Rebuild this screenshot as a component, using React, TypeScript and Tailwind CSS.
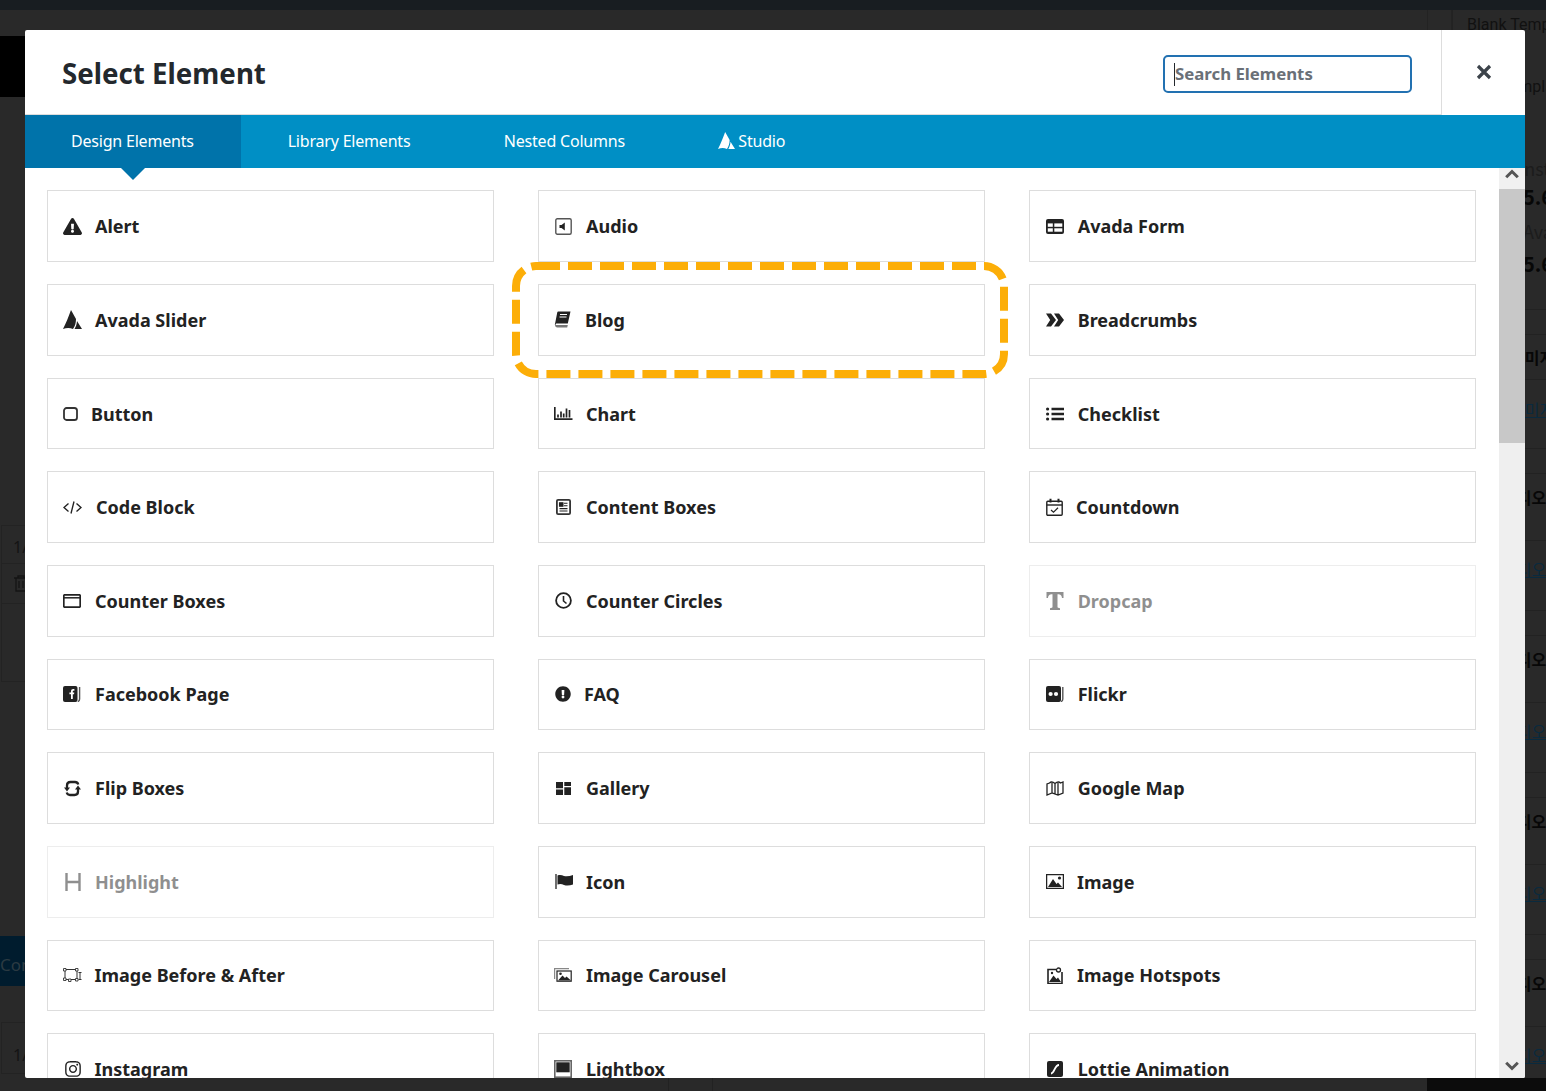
import React from "react";
import { FaExclamationTriangle, FaExclamationCircle, FaInstagram } from "react-icons/fa";

const sv = (w: number, h: number, children: React.ReactNode) => (
  <svg width={w} height={h} viewBox={`0 0 ${w} ${h}`} fill="none" className="block shrink-0">{children}</svg>
);
const C = "#222222";

function AvadaLogo({ color, w, h }: { color: string; w: number; h: number }) {
  return (
    <svg width={w} height={h} viewBox="0 0 19 19" className="block shrink-0">
      <path d="M0 19C3 13 5.5 7 8 0L13 9C13 13 12 16 10 19C7 17.5 3.5 17.5 0 19Z" fill={color} />
      <path d="M14 11L19 19H11.5C12.8 17 13.8 14 14 11Z" fill={color} />
    </svg>
  );
}

const icons: Record<string, React.ReactNode> = {
  alert: <FaExclamationTriangle size={19} color={C} />,
  audio: sv(17, 17, <><rect x="0.8" y="0.8" width="15.4" height="15.4" rx="1.5" stroke="#555" strokeWidth="1.4" /><path d="M4.5 7H6.5L9.8 4.5V12.5L6.5 10H4.5Z" fill={C} /></>),
  form: sv(18, 15, <><rect width="18" height="15" rx="2" fill={C} /><rect x="1.8" y="4.4" width="5" height="3.4" fill="#fff" /><rect x="8.3" y="4.4" width="8" height="3.4" fill="#fff" /><rect x="1.8" y="9.3" width="5" height="3.4" fill="#fff" /><rect x="8.3" y="9.3" width="8" height="3.4" fill="#fff" /></>),
  avada: <AvadaLogo color={C} w={19} h={19} />,
  blog: sv(17, 17, <><path d="M4.2 0.5H16.5L13.8 12.5H3C1.8 12.5 1.4 13.2 1.5 14H0.8L3.3 1.3C3.4 0.8 3.7 0.5 4.2 0.5Z" fill={C} /><path d="M1 14C1 15.6 2 16.5 3.2 16.5H13.2L13.8 14Z" fill="#777" /><path d="M6 3.5H13M5.5 6H12.5" stroke="#fff" strokeWidth="1" /></>),
  crumbs: sv(18, 14, <path d="M0 0.5H5L10 7L5 13.5H0L4.2 7ZM8 0.5H13L18 7L13 13.5H8L12.2 7Z" fill={C} />),
  button: sv(15, 14, <rect x="1" y="1" width="13" height="12" rx="2.6" stroke="#333" strokeWidth="1.8" />),
  chart: sv(19, 13, <path d="M0.8 0V12.1H18.5M4 7.5V10.5M7 4.5V10.5M9.7 6.5V10.5M12.5 1.5V10.5M15.5 3V10.5" stroke="#222" strokeWidth="1.7" />),
  checklist: sv(18, 14, <><circle cx="1.6" cy="2" r="1.6" fill={C} /><circle cx="1.6" cy="7" r="1.6" fill={C} /><circle cx="1.6" cy="12" r="1.6" fill={C} /><path d="M5.5 2H18M5.5 7H18M5.5 12H18" stroke={C} strokeWidth="2.3" /></>),
  code: sv(19, 13, <path d="M5.5 2.5L1 6.5L5.5 10.5M13.5 2.5L18 6.5L13.5 10.5M11 0.5L8 12.5" stroke={C} strokeWidth="1.35" />),
  content: sv(15, 16, <><rect x="0.9" y="0.9" width="13.2" height="14.2" rx="1.2" stroke="#333" strokeWidth="1.8" /><path d="M3.5 3.8H7V7.3H3.5ZM8 4.2H11.5M8 6.8H11.5M3.5 9.6H11.5M3.5 12H11.5" fill={C} stroke={C} strokeWidth="1.1" /></>),
  countdown: sv(17, 18, <><rect x="0.8" y="3.2" width="15.4" height="14" rx="1" stroke={C} strokeWidth="1.4" /><path d="M0.8 7H16.2" stroke={C} strokeWidth="1.4" /><path d="M4.5 0.8V4.5M12.5 0.8V4.5" stroke={C} strokeWidth="2" /><path d="M5 12L7.5 14.2L12 9.8" stroke={C} strokeWidth="1.2" /></>),
  boxes: sv(18, 14, <><rect x="0.8" y="0.8" width="16.4" height="12.4" rx="1" stroke="#222" strokeWidth="1.7" /><path d="M1 3.8H17" stroke="#222" strokeWidth="1.5" /></>),
  circles: sv(17, 17, <><circle cx="8.5" cy="8.5" r="7.4" stroke={C} strokeWidth="1.8" /><path d="M8.5 4V9L11.5 11.5" stroke={C} strokeWidth="1.6" /></>),
  dropcap: sv(18, 18, <path d="M0.5 0H17.5V6H16C15.6 3.5 15 2.3 11.5 2.3V15C11.5 15.8 12.5 16 14 16.2V18H4V16.2C5.5 16 6.5 15.8 6.5 15V2.3C3 2.3 2.4 3.5 2 6H0.5Z" fill={C} />),
  fb: sv(18, 16, <><rect width="14.5" height="16" rx="2" fill={C} /><path d="M8 13V8.2H6.4V6.4H8V5.2C8 3.7 9 3 10.1 3H11.4V4.7H10.5C9.9 4.7 9.8 5 9.8 5.5V6.4H11.3L11 8.2H9.8V13Z" fill="#fff" /><path d="M16.6 1V13C16.6 14.5 16 15.3 14.8 15.6" stroke="#555" strokeWidth="1.4" /></>),
  faq: <FaExclamationCircle size={16} color={C} />,
  flickr: sv(18, 16, <><rect width="15" height="16" rx="2" fill={C} /><circle cx="4.6" cy="8" r="2.1" fill="#fff" /><circle cx="10" cy="8" r="2.1" fill="#fff" /><path d="M16.8 1V13C16.8 14.5 16.2 15.3 15 15.6" stroke="#555" strokeWidth="1.4" /></>),
  flip: sv(17, 17, <><path d="M3 8V5.5C3 3.3 4.5 2 6.5 2H11C12.8 2 13.8 3 14.3 4.5" stroke={C} strokeWidth="2.3" /><path d="M14 9V11.5C14 13.7 12.5 15 10.5 15H6C4.2 15 3.2 14 2.7 12.5" stroke={C} strokeWidth="2.3" /><path d="M0 7.5H6L3 11.5ZM11 9.5H17L14 5.5Z" fill={C} /></>),
  gallery: sv(15, 13, <path d="M0 0H7V6.2H0ZM8.3 0H15V4H8.3ZM0 7.5H7V13H0ZM8.3 5.2H15V13H8.3Z" fill={C} />),
  map: sv(18, 15, <path d="M1 3V14L6 12L12 14L17 12V1L14.5 2C13 0.5 11 0.8 9 2.6C7 0.8 5 0.5 3.5 2ZM6 2V12M9 3V13M12 2V14" stroke="#222" strokeWidth="1.3" />),
  highlight: sv(16, 18, <path d="M1.5 0V18M14.5 0V18M1.5 9H14.5" stroke={C} strokeWidth="2.4" />),
  icon: sv(18, 15, <><path d="M1 0V15" stroke={C} strokeWidth="1.3" /><path d="M2.5 1.5C5 0.5 7 1.2 9 2C12 2.7 15 2 18 1V10.5C15 11.5 12 12 9 11C7 10 5 9.5 2.5 10.5Z" fill={C} /></>),
  image: sv(18, 15, <><rect x="0.6" y="0.6" width="16.8" height="13.8" stroke={C} strokeWidth="1.3" /><path d="M2 13L7 5L10.5 10L12 8.5L16 13Z" fill={C} /><circle cx="13.5" cy="4" r="1.6" fill={C} /></>),
  before: sv(19, 14, <><path d="M2 1.5H14V11.5H2ZM15.5 4.5H18.5M17 4.5V11.5M15.5 11.5H18.5" stroke="#333" strokeWidth="1" /><path d="M0.5 0.5H3V3H0.5ZM12.5 0.5H15V3H12.5ZM0.5 10H3V12.5H0.5ZM12.5 10.5H15V13H12.5ZM5.5 11H8V13.5H5.5Z" stroke="#333" strokeWidth="0.9" fill="#fff" /></>),
  carousel: sv(18, 14, <><path d="M0.6 11V0.6H15" stroke="#888" strokeWidth="1.2" /><rect x="2.4" y="2.4" width="15.4" height="11.4" fill={C} /><rect x="3.6" y="3.6" width="13" height="9" fill="#fff" /><path d="M4 12.5L8.5 7.5L11 10L12.5 8.5L17 12.5Z" fill={C} /><circle cx="6.5" cy="5.8" r="1.3" fill={C} /></>),
  hotspots: sv(16, 17, <><path d="M9 2.5H1V16.5H15V5" stroke={C} strokeWidth="1.6" /><path d="M2 15L6.5 8.5L9.5 12L11 10.5L14 15Z" fill={C} /><circle cx="11.5" cy="3" r="2" stroke={C} strokeWidth="1.3" /><circle cx="5" cy="6" r="1.2" fill={C} /></>),
  instagram: <FaInstagram size={18} color={C} />,
  lightbox: sv(18, 18, <><rect x="0.8" y="0.8" width="16.4" height="16.4" stroke="#666" strokeWidth="1.6" /><rect x="2.3" y="2.3" width="13.4" height="10" fill={C} /></>),
  lottie: sv(16, 16, <><rect width="16" height="16" rx="2" fill={C} /><path d="M4 12.5C7.5 12.5 7.5 4 12 4" stroke="#fff" strokeWidth="1.8" /></>),
};

type Item = { label: string; icon: string; w: string; off?: boolean };
const items: Item[] = [
  { label: "Alert", icon: "alert", w: "w-[32px]" },
  { label: "Audio", icon: "audio", w: "w-[32px] pl-px" },
  { label: "Avada Form", icon: "form", w: "w-[32.7px] pl-px" },
  { label: "Avada Slider", icon: "avada", w: "w-[32px]" },
  { label: "Blog", icon: "blog", w: "w-[31px]" },
  { label: "Breadcrumbs", icon: "crumbs", w: "w-[32.7px] pl-px" },
  { label: "Button", icon: "button", w: "w-[28px]" },
  { label: "Chart", icon: "chart", w: "w-[32px]" },
  { label: "Checklist", icon: "checklist", w: "w-[32.7px] pl-px" },
  { label: "Code Block", icon: "code", w: "w-[33px]" },
  { label: "Content Boxes", icon: "content", w: "w-[32px] pl-[2px]" },
  { label: "Countdown", icon: "countdown", w: "w-[31px] pl-px" },
  { label: "Counter Boxes", icon: "boxes", w: "w-[32px]" },
  { label: "Counter Circles", icon: "circles", w: "w-[32px] pl-px" },
  { label: "Dropcap", icon: "dropcap", w: "w-[32.7px] pl-px", off: true },
  { label: "Facebook Page", icon: "fb", w: "w-[32px]" },
  { label: "FAQ", icon: "faq", w: "w-[30px] pl-px" },
  { label: "Flickr", icon: "flickr", w: "w-[32.7px] pl-px" },
  { label: "Flip Boxes", icon: "flip", w: "w-[32px] pl-px" },
  { label: "Gallery", icon: "gallery", w: "w-[32px] pl-[2px]" },
  { label: "Google Map", icon: "map", w: "w-[32.7px] pl-px" },
  { label: "Highlight", icon: "highlight", w: "w-[32px] pl-[2px]", off: true },
  { label: "Icon", icon: "icon", w: "w-[32px] pl-px" },
  { label: "Image", icon: "image", w: "w-[32px] pl-px" },
  { label: "Image Before & After", icon: "before", w: "w-[31.5px]" },
  { label: "Image Carousel", icon: "carousel", w: "w-[32px]" },
  { label: "Image Hotspots", icon: "hotspots", w: "w-[32px] pl-[2px]" },
  { label: "Instagram", icon: "instagram", w: "w-[31.5px] pl-px" },
  { label: "Lightbox", icon: "lightbox", w: "w-[32px]" },
  { label: "Lottie Animation", icon: "lottie", w: "w-[32.7px] pl-[2px]" },
];

function Card({ it }: { it: Item }) {
  return (
    <div className={`h-[71.65px] border border-[#dddddd] bg-white pl-[15px] pt-[0.1px] flex items-center text-[18px] font-bold leading-none text-[#222222] ${it.off ? "opacity-50" : ""}`}>
      <span className={`${it.w} shrink-0 flex items-center`}>{icons[it.icon]}</span>
      <span className="whitespace-nowrap">{it.label}</span>
    </div>
  );
}

function Strip({ h, t, pl, kind }: { h: string; t?: string; pl?: string; kind?: "b" | "l" | "n" }) {
  return (
    <div className={`${h} shrink-0 flex items-center border-b border-[#222222] whitespace-nowrap text-[16px] ${pl ?? ""} ${kind === "b" ? "font-bold text-[#070707]" : kind === "l" ? "underline text-[#0a2a3e]" : "text-[#111111]"}`}>{t}</div>
  );
}

function RightStrip() {
  const group = (key: string) => (
    <React.Fragment key={key}>
      <Strip h="h-[25px]" />
      <Strip h="h-[67px]" t="비디오" pl="pl-[49px] pb-[21px]" kind="b" />
      <Strip h="h-[70px]" t="비디오" pl="pl-[49px] pb-[14px]" kind="l" />
    </React.Fragment>
  );
  return (
    <div className="w-[94px] shrink-0 flex flex-col overflow-hidden border-l border-[#222222] font-['Noto_Sans_CJK_KR',sans-serif]">
      <div className="h-[29px] shrink-0 flex items-center pl-[14px] whitespace-nowrap text-[16px] text-[#111111] font-[Roboto,sans-serif]">Blank Template</div>
      <div className="h-[34px] shrink-0" />
      <div className="h-[28px] shrink-0 flex items-center pl-[48px] whitespace-nowrap text-[16px] text-[#111111] font-[Roboto,sans-serif]">Template</div>
      <div className="h-[53px] shrink-0" />
      <div className="h-[28px] shrink-0 flex items-center pl-[66px] whitespace-nowrap text-[18px] text-[#1c1c1c]">Install</div>
      <div className="h-[30px] shrink-0 flex items-center pl-[70px] whitespace-nowrap text-[20px] font-bold text-[#070707]">5.6.2</div>
      <div className="h-[38px] shrink-0 flex items-center pl-[70px] whitespace-nowrap text-[18px] text-[#1c1c1c]">Avada</div>
      <div className="h-[27px] shrink-0 flex items-center pl-[70px] whitespace-nowrap text-[20px] font-bold text-[#070707]">5.6.2</div>
      <Strip h="h-[33px]" />
      <Strip h="h-[25px]" />
      <Strip h="h-[45px]" t="이미지" pl="pl-[57px] pb-[1px]" kind="b" />
      <Strip h="h-[69px]" t="이미지" pl="pl-[57px] pb-[10px]" kind="l" />
      {group("a")}
      {group("b")}
      {group("c")}
      {group("d")}
    </div>
  );
}

function LeftStrip() {
  return (
    <div className="w-[25px] shrink-0 flex flex-col overflow-hidden font-['Noto_Sans',sans-serif]">
      <div className="h-[26px] shrink-0" />
      <div className="h-[61px] shrink-0 bg-black" />
      <div className="h-[428px] shrink-0" />
      <div className="h-[39px] shrink-0 border border-r-0 border-[#232323] ml-[1px] pl-[11px] pt-[4px] flex items-center text-[16px] text-[#141414] whitespace-nowrap">1/1</div>
      <div className="h-[40px] shrink-0 border-b border-l border-[#232323] ml-[1px] pl-[12px] flex items-center">
        <svg width="14" height="17" viewBox="0 0 14 17" fill="none" className="shrink-0"><path d="M0 3H14M4 3V1H10V3M2 3V16H12V3M5 6V13M9 6V13" stroke="#141414" strokeWidth="1.3" /></svg>
      </div>
      <div className="h-[78px] shrink-0 border-b border-l border-[#232323] ml-[1px]" />
      <div className="h-[254px] shrink-0" />
      <div className="h-[50px] shrink-0 bg-[#001c2e] pt-[8px] flex items-center text-[17px] text-[#2b3a42] whitespace-nowrap overflow-hidden">Con</div>
      <div className="h-[36px] shrink-0" />
      <div className="h-[52px] shrink-0 border border-r-0 border-[#232323] ml-[1px] pl-[11px] pt-[14px] flex items-center text-[16px] text-[#141414] whitespace-nowrap">1/1</div>
    </div>
  );
}

function Backdrop() {
  return (
    <>
      <div className="h-[10px] shrink-0 bg-[#181d21]" />
      <div className="flex-1 min-h-0 flex">
        <LeftStrip />
        <div className="flex-1 flex justify-end items-start">
          <div className="h-[20px] w-[25px] border-r border-l border-[#232323]" />
        </div>
        <RightStrip />
      </div>
      <div className="h-[13px] shrink-0 flex">
        <div className="w-[669px] border-r border-[#222222]" />
        <div className="w-[44px] border-r border-[#222222]" />
        <div className="flex-1" />
        <div className="w-[119px] bg-[#0c0c0c]" />
      </div>
    </>
  );
}

const tabBase = "px-[46.7px] pb-[2px] h-full flex items-center text-[16px] text-white whitespace-nowrap tracking-[-0.2px]";

function ChevronBtn({ up }: { up?: boolean }) {
  return (
    <svg width="14" height="10" viewBox="0 0 14 10" fill="none" className="block">
      <path d={up ? "M1.2 8.3L7 2.5L12.8 8.3" : "M1.2 1.7L7 7.5L12.8 1.7"} stroke="#555555" strokeWidth="3" />
    </svg>
  );
}

export default function App() {
  return (
    <div className="relative w-[1546px] h-[1091px] overflow-hidden bg-[#292929] flex flex-col font-['Noto_Sans',sans-serif]">
      <Backdrop />
      <div className="absolute left-[25px] top-[30px] w-[1500px] h-[1048px] bg-white rounded-[2px] flex flex-col overflow-hidden">
        <header className="h-[85px] shrink-0 flex items-stretch">
          <div className="flex-1 border-b border-[#dddddd] pl-[37px] pr-[29px] flex items-center justify-between">
            <h2 className="text-[27.7px] mt-[4px] font-bold text-[#23282d] leading-none">Select Element</h2>
            <div className="relative mt-[4px]">
              <input
                readOnly
                placeholder="Search Elements"
                className="block w-[249px] h-[38px] rounded-[5px] border-2 border-[#2271b1] pl-[10px] pr-2 pb-[2px] text-[16.8px] font-bold bg-white outline-none placeholder:text-[#6a7077]"
              />
              <span className="absolute left-[11px] top-[8px] h-[23px] w-px bg-[#23282d]" />
            </div>
          </div>
          <div className="w-[84px] shrink-0 border-l border-[#dddddd] flex items-center justify-center">
            <svg width="16" height="16" viewBox="0 0 16 16" fill="none" className="mb-[2px]"><path d="M2 2L14 14M14 2L2 14" stroke="#3c434a" strokeWidth="3.2" /></svg>
          </div>
        </header>
        <nav className="relative z-10 h-[53px] shrink-0 bg-[#008fc5] flex">
          <div className="pl-[46px] pb-[2px] h-full flex items-center text-[16px] text-white whitespace-nowrap tracking-[-0.2px] relative bg-[#0073aa] w-[216px]">
            Design Elements
            <span className="absolute left-[96px] top-full w-0 h-0 border-x-[12px] border-x-transparent border-t-[12px] border-t-[#0073aa]" />
          </div>
          <div className={tabBase}>Library Elements</div>
          <div className={tabBase}>Nested Columns</div>
          <div className={`${tabBase} gap-[3px]`}>
            <AvadaLogo color="#ffffff" w={17} h={17} />
            Studio
          </div>
        </nav>
        <div className="flex-1 min-h-0 flex">
          <div className="relative flex-1 overflow-hidden pt-[22.42px] pl-[22px]">
            <div className="grid grid-cols-[repeat(3,447px)] gap-x-[44px] gap-y-[22px]">
              {items.map((it) => (
                <Card key={it.label} it={it} />
              ))}
            </div>
            <svg width="496" height="116" viewBox="0 0 496 116" fill="none" className="absolute left-[487px] top-[94px]">
              <rect x="4" y="4" width="488" height="108" rx="20" stroke="#fcae08" strokeWidth="8" strokeDasharray="24 8" />
            </svg>
          </div>
          <div className="w-[26px] shrink-0 bg-[#efefef] flex flex-col">
            <div className="h-[21px] shrink-0 flex items-start pt-[1px] justify-center bg-[#f1f1f1]"><ChevronBtn up /></div>
            <div className="h-[254px] shrink-0 bg-[#c8c8c8]" />
            <div className="flex-1 flex items-end justify-center pb-[7px]"><ChevronBtn /></div>
          </div>
        </div>
      </div>
    </div>
  );
}
